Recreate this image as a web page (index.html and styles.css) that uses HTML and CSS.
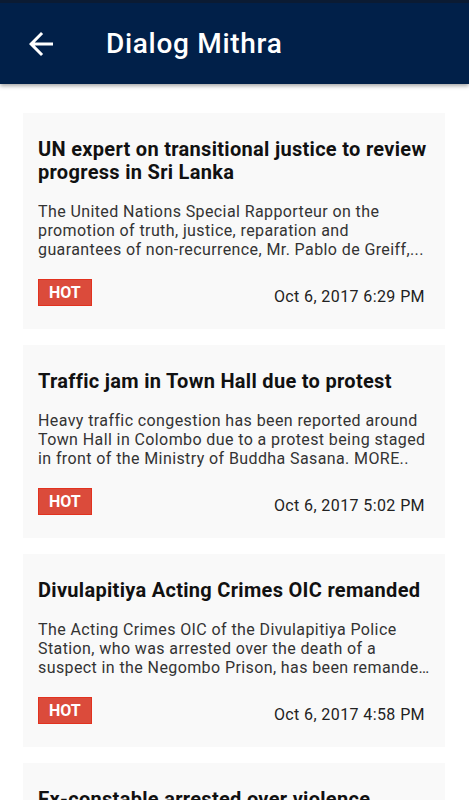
FILE: index.html
```html
<!DOCTYPE html>
<html lang="en">
<head>
  <meta charset="UTF-8">
  <meta name="viewport" content="width=device-width, initial-scale=1.0">
  <title>Dialog Mithra</title>
  <link rel="stylesheet" href="styles.css">
</head>
<body>
  <div class="toolbar">
    <button class="back-button" aria-label="Back">
      <svg viewBox="0 0 24 24" width="36" height="36"><path d="M20 11H7.83l5.59-5.59L12 4l-8 8 8 8 1.41-1.41L7.83 13H20v-2z" fill="#fff"/></svg>
    </button>
    <h1>Dialog Mithra</h1>
  </div>

  <ul class="news-list">
    <li class="news-card">
      <h2>UN expert on transitional justice to review progress in Sri Lanka</h2>
      <p>The United Nations Special Rapporteur on the promotion of truth, justice, reparation and guarantees of non-recurrence, Mr. Pablo de Greiff,...</p>
      <div class="card-footer">
        <span class="hot">HOT</span>
        <span class="date">Oct 6, 2017 6:29 PM</span>
      </div>
    </li>
    <li class="news-card">
      <h2>Traffic jam in Town Hall due to protest</h2>
      <p>Heavy traffic congestion has been reported around Town Hall in Colombo due to a protest being staged in front of the Ministry of Buddha Sasana. MORE..</p>
      <div class="card-footer">
        <span class="hot">HOT</span>
        <span class="date">Oct 6, 2017 5:02 PM</span>
      </div>
    </li>
    <li class="news-card">
      <h2>Divulapitiya Acting Crimes OIC remanded</h2>
      <p>The Acting Crimes OIC of the Divulapitiya Police Station, who was arrested over the death of a suspect in the Negombo Prison, has been remanded until October 20.</p>
      <div class="card-footer">
        <span class="hot">HOT</span>
        <span class="date">Oct 6, 2017 4:58 PM</span>
      </div>
    </li>
    <li class="news-card">
      <h2>Ex-constable arrested over violence</h2>
      <p>A former police constable has been arrested.</p>
      <div class="card-footer">
        <span class="hot">HOT</span>
        <span class="date">Oct 6, 2017 4:40 PM</span>
      </div>
    </li>
  </ul>
</body>
</html>
```

FILE: styles.css
```css
body {
  margin: 0;
  font-family: Roboto, "Noto Sans", sans-serif;
  background-color: #fff;
  color: #222;
  height: 800px;
  overflow: hidden;
}
.toolbar {
  display: flex;
  align-items: center;
  height: 81px;
  border-top: 3px solid #0b1b33;
  background-color: #012049;
  box-shadow: 0 2px 4px rgba(0, 0, 0, 0.35);
  position: relative;
  z-index: 1;
}
.back-button {
  background: none;
  border: none;
  padding: 0;
  margin: 0 0 0 23px;
  width: 36px;
  height: 36px;
  display: flex;
}
.toolbar h1 {
  margin: 0 0 0 47px;
  color: #fff;
  font-size: 28px;
  font-weight: 500;
  letter-spacing: 0.7px;
}
.news-list {
  list-style-type: none;
  margin: 0;
  padding: 29px 24px 0 23px;
  display: flex;
  flex-direction: column;
  gap: 16px;
}
.news-card {
  background-color: #f9f9f9;
  padding: 25px 13px 23px 15px;
}
.news-card h2 {
  margin: 0 2px 0 0;
  font-size: 20px;
  line-height: 23px;
  font-weight: bold;
  letter-spacing: 0.3px;
  color: #111;
}
.news-card p {
  margin: 18px 0 0;
  font-size: 16px;
  line-height: 19px;
  letter-spacing: 0.4px;
  color: #333;
  display: -webkit-box;
  -webkit-line-clamp: 3;
  -webkit-box-orient: vertical;
  overflow: hidden;
}
.card-footer {
  display: flex;
  justify-content: space-between;
  align-items: flex-end;
  margin: 20px 7px 0 0;
}
.hot {
  background-color: #db4b3b;
  border: 1px solid #e2321f;
  color: #fff;
  font-weight: bold;
  font-size: 16px;
  line-height: 25px;
  padding: 0 10px;
}
.date {
  font-size: 16px;
  line-height: 19px;
  letter-spacing: 0.4px;
  color: #222;
}
```
